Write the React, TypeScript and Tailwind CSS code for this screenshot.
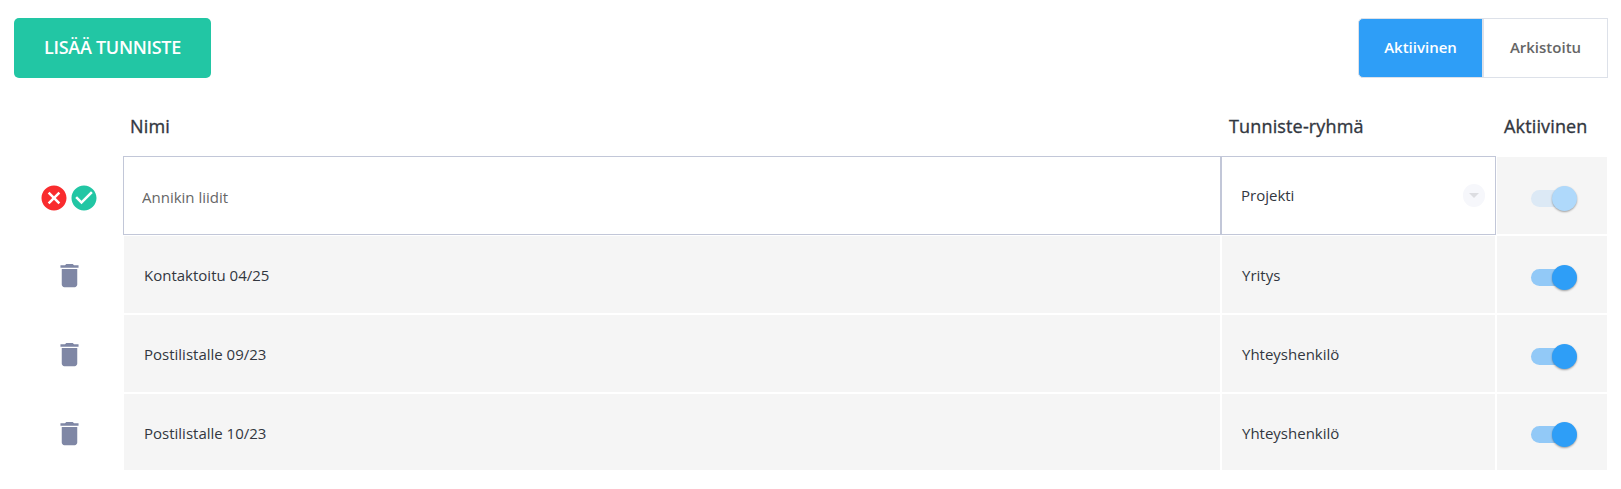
import { useState } from "react";
import clsx from "clsx";

interface Tag {
  id: number;
  name: string;
  group: string;
}

const tags: Tag[] = [
  { id: 1, name: "Kontaktoitu 04/25", group: "Yritys" },
  { id: 2, name: "Postilistalle 09/23", group: "Yhteyshenkilö" },
  { id: 3, name: "Postilistalle 10/23", group: "Yhteyshenkilö" },
];

const rowGrid = "grid grid-cols-[110px_1096px_273px_110px] gap-x-[2px]";

const Switch = ({ disabled = false }: { disabled?: boolean }) => (
  <button
    disabled={disabled}
    className="flex items-center w-[46px] h-[25px] mt-[5px]"
  >
    <span
      className={clsx(
        "w-[34px] h-[17px] rounded-full",
        disabled ? "bg-[#dce9f5]" : "bg-[#92c9f7]"
      )}
    />
    <span
      className={clsx(
        "w-[25px] h-[25px] -ml-[13px] rounded-full shrink-0 shadow-[0_1px_2px_rgba(0,0,0,0.35)]",
        disabled ? "bg-[#afd9fb]" : "bg-[#2e9ef7]"
      )}
    />
  </button>
);

const TrashIcon = () => (
  <svg viewBox="0 0 24 24" className="w-[31px] h-[31px]" fill="#7f87a5">
    <path d="M6 19c0 1.1.9 2 2 2h8c1.1 0 2-.9 2-2V7H6v12zM19 4h-3.5l-1-1h-5l-1 1H5v2h14V4z" />
  </svg>
);

const CancelIcon = () => (
  <svg viewBox="0 0 24 24" className="w-[30px] h-[30px]" fill="#f92c2e">
    <path d="M12 2C6.47 2 2 6.47 2 12s4.47 10 10 10 10-4.47 10-10S17.53 2 12 2zm5 13.59L15.59 17 12 13.41 8.41 17 7 15.59 10.59 12 7 8.41 8.41 7 12 10.59 15.59 7 17 8.41 13.41 12 17 15.59z" />
  </svg>
);

const AcceptIcon = () => (
  <svg viewBox="0 0 24 24" className="w-[30px] h-[30px]" fill="#22c6a4">
    <path d="M12 2C6.48 2 2 6.48 2 12s4.48 10 10 10 10-4.48 10-10S17.52 2 12 2zm-2 15l-5-5 1.41-1.41L10 14.17l7.59-7.59L19 8l-9 9z" />
  </svg>
);

const App = () => {
  const [tab, setTab] = useState<string>("active");
  const [name, setName] = useState<string>("Annikin liidit");

  return (
    <div className="w-[1621px] h-[489px] bg-white pt-[18px] pl-[14px] pr-[13px] font-['Open_Sans','Noto_Sans',sans-serif] text-[#32373f] overflow-hidden">
      <div className="flex justify-between">
        <button className="w-[197px] h-[60px] pb-[2px] rounded-[5px] bg-[#22c6a4] text-white text-[18px] font-semibold tracking-[-0.3px]">
          LISÄÄ TUNNISTE
        </button>
        <div className="flex h-[60px] text-[15px] font-semibold">
          <button
            className={clsx(
              "w-[125px] pb-[2px] border border-[#dde1e9] rounded-l-[5px]",
              tab === "active" ? "bg-[#2e9ef7] text-white" : "text-[#666]"
            )}
            onClick={() => setTab("active")}
          >
            Aktiivinen
          </button>
          <button
            className={clsx(
              "w-[125px] pb-[2px] border border-[#dde1e9]",
              tab === "archived" ? "bg-[#2e9ef7] text-white" : "text-[#666]"
            )}
            onClick={() => setTab("archived")}
          >
            Arkistoitu
          </button>
        </div>
      </div>

      <div className={clsx(rowGrid, "h-[79px] pt-[32px] -ml-[2px] text-[18px] font-medium tracking-[0.15px] leading-[32px] [-webkit-text-stroke:0.35px_#32373f]")}>
        <div />
        <div className="pl-[6px]">Nimi</div>
        <div className="pl-[7px]">Tunniste-ryhmä</div>
        <div className="pl-[7px]">Aktiivinen</div>
      </div>

      {/* Row in edit mode */}
      <div className={clsx(rowGrid, "h-[77px] -ml-[2px] mb-[2px] text-[15px]")}>
        <div className="flex items-center justify-center pt-[5px] pl-[4px]">
          <CancelIcon />
          <AcceptIcon />
        </div>
        <div className="-m-px border border-[#c2c7d8]">
          <input
            className="w-full h-full pt-[2px] pl-[18px] text-[#666] outline-none"
            value={name}
            onChange={(e) => setName(e.target.value)}
          />
        </div>
        <div className="-m-px border border-[#c2c7d8] flex items-center justify-between pl-[19px] pr-[10px]">
          <span className="h-[19px] leading-[18px] overflow-hidden">Projekti</span>
          <span className="flex items-center justify-center w-[22px] h-[23px] rounded-full bg-[#f6f7fb]">
            <svg viewBox="0 0 10 5" className="w-[10px] h-[5px]" fill="#dcdde1">
              <path d="M0 0h10L5 5z" />
            </svg>
          </span>
        </div>
        <div className="bg-[#f5f5f5] flex items-center justify-center pl-[4px]">
          <Switch disabled />
        </div>
      </div>

      {tags.map((tag) => (
        <div
          key={tag.id}
          className={clsx(rowGrid, "h-[77px] last:h-[76px] -ml-[2px] mb-[2px] text-[15px]")}
        >
          <div className="flex items-center justify-center pt-[2px] pl-[4px]">
            <TrashIcon />
          </div>
          <div className="bg-[#f5f5f5] flex items-center pt-[2px] pl-[20px]">{tag.name}</div>
          <div className="bg-[#f5f5f5] flex items-center pt-[2px] pl-[20px]">{tag.group}</div>
          <div className="bg-[#f5f5f5] flex items-center justify-center pl-[4px]">
            <Switch />
          </div>
        </div>
      ))}
    </div>
  );
};

export default App;
